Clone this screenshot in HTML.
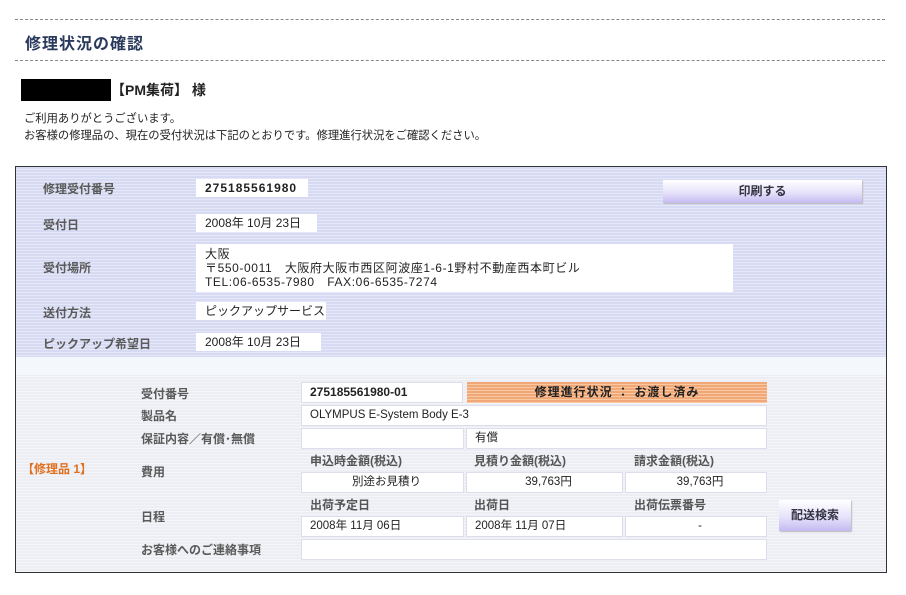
<!DOCTYPE html>
<html><head><meta charset="utf-8"><style>
body{margin:0;width:906px;height:595px;background:#fff;position:relative;font-family:"Liberation Sans","Noto Sans CJK JP",sans-serif;font-size:12px;color:#222;overflow:hidden}
.a{position:absolute;white-space:nowrap}
.dash{position:absolute;left:15px;width:870px;border-top:1px dashed #888}
.lb{position:absolute;font-weight:bold;color:#5a5a5a;font-size:12px}
.bx{position:absolute;background:#fff;box-sizing:border-box;padding-left:9px;line-height:18px}
.lw{position:absolute;background:#fff;box-sizing:border-box;border:1px solid #dde;padding-left:8px;line-height:19px;font-size:11.5px}
.hd{position:absolute;font-weight:bold;color:#555}
.btn{position:absolute;background:linear-gradient(#fff,#e6e2fa 55%,#c4baf0);box-shadow:1px 1px 1px #bbb;text-align:center;font-weight:bold;color:#334}
</style></head><body>
<div class="dash" style="top:19px"></div>
<div class="a" style="left:25px;top:30px;font-size:16px;font-weight:bold;color:#2a3a5c;letter-spacing:1px">修理状況の確認</div>
<div class="dash" style="top:60px"></div>
<div class="a" style="left:21px;top:79px;width:90px;height:22px;background:#000"></div>
<div class="a" style="left:111px;top:80px;font-size:14px;font-weight:bold;line-height:20px">【PM集荷】 様</div>
<div class="a" style="left:24px;top:111px;line-height:17px;font-size:11.3px">ご利用ありがとうございます。<br>お客様の修理品の、現在の受付状況は下記のとおりです。修理進行状況をご確認ください。</div>

<div class="a" style="left:15px;top:166px;width:870px;height:405px;border:1px solid #333;background:repeating-linear-gradient(#eceef3 0 2px,#f4f5f8 2px 3px)"></div>
<div class="a" style="left:16px;top:167px;width:870px;height:190px;background:repeating-linear-gradient(#d6daf2 0 2px,#e6e8f7 2px 3px)"></div>
<div class="a" style="left:16px;top:357px;width:870px;height:18px;background:#f4f8fc"></div>

<div class="lb" style="left:43px;top:180px">修理受付番号</div>
<div class="bx" style="left:196px;top:179px;width:112px;height:18px;font-weight:bold;letter-spacing:1px">275185561980</div>
<div class="lb" style="left:43px;top:216px">受付日</div>
<div class="bx" style="left:196px;top:214px;width:121px;height:18px">2008年 10月 23日</div>
<div class="lb" style="left:43px;top:259px">受付場所</div>
<div class="bx" style="left:196px;top:244px;width:537px;height:48px;line-height:14px;padding-top:3px;letter-spacing:0.6px">大阪<br>〒550-0011　大阪府大阪市西区阿波座1-6-1野村不動産西本町ビル<br>TEL:06-6535-7980　FAX:06-6535-7274</div>
<div class="lb" style="left:43px;top:304px">送付方法</div>
<div class="bx" style="left:196px;top:302px;width:130px;height:18px">ピックアップサービス</div>
<div class="lb" style="left:43px;top:335px">ピックアップ希望日</div>
<div class="bx" style="left:196px;top:333px;width:125px;height:18px">2008年 10月 23日</div>
<div class="btn" style="left:663px;top:180px;width:199px;height:23px;line-height:23px">印刷する</div>

<div class="a" style="left:22px;top:460px;font-weight:bold;color:#e07020">【修理品 1】</div>
<div class="lb" style="left:141px;top:385px">受付番号</div>
<div class="lb" style="left:141px;top:407px">製品名</div>
<div class="lb" style="left:141px;top:430px">保証内容／有償･無償</div>
<div class="lb" style="left:141px;top:463px">費用</div>
<div class="lb" style="left:141px;top:508px">日程</div>
<div class="lb" style="left:141px;top:541px">お客様へのご連絡事項</div>

<div class="lw" style="left:301px;top:382px;width:162px;height:21px;font-weight:bold;font-size:12px">275185561980-01</div>
<div class="a" style="left:467px;top:382px;width:300px;height:21px;background:repeating-linear-gradient(#f0a878 0 2px,#f8c8a0 2px 3px);text-align:center;font-weight:bold;line-height:21px;letter-spacing:1px">修理進行状況 ： お渡し済み</div>
<div class="lw" style="left:301px;top:405px;width:466px;height:21px">OLYMPUS E-System Body E-3</div>
<div class="lw" style="left:301px;top:428px;width:163px;height:21px"></div>
<div class="lw" style="left:466px;top:428px;width:301px;height:21px">有償</div>
<div class="hd" style="left:310px;top:452px">申込時金額(税込)</div>
<div class="hd" style="left:474px;top:452px">見積り金額(税込)</div>
<div class="hd" style="left:634px;top:452px">請求金額(税込)</div>
<div class="lw" style="left:301px;top:472px;width:163px;height:21px;text-align:center">別途お見積り</div>
<div class="lw" style="left:466px;top:472px;width:157px;height:21px;text-align:center">39,763円</div>
<div class="lw" style="left:625px;top:472px;width:142px;height:21px;text-align:center">39,763円</div>
<div class="hd" style="left:310px;top:496px">出荷予定日</div>
<div class="hd" style="left:474px;top:496px">出荷日</div>
<div class="hd" style="left:634px;top:496px">出荷伝票番号</div>
<div class="lw" style="left:301px;top:516px;width:163px;height:21px">2008年 11月 06日</div>
<div class="lw" style="left:466px;top:516px;width:157px;height:21px">2008年 11月 07日</div>
<div class="lw" style="left:625px;top:516px;width:142px;height:21px;text-align:center">-</div>
<div class="lw" style="left:301px;top:539px;width:466px;height:21px"></div>
<div class="btn" style="left:779px;top:500px;width:72px;height:31px;line-height:31px">配送検索</div>
</body></html>
